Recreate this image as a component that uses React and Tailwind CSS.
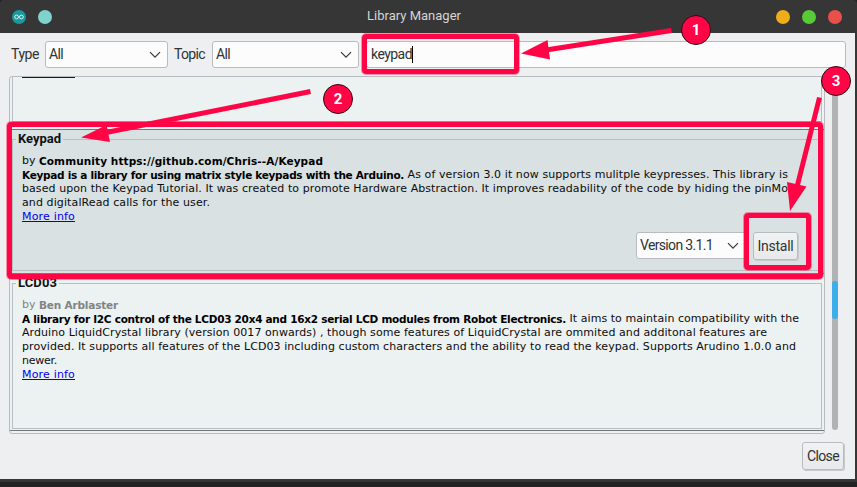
import { useLayoutEffect, useRef } from "react";

// Spreads the letters of one run of text over an exact width.
function Fit({ w, className = "", children }) {
  const ref = useRef(null);
  useLayoutEffect(() => {
    const el = ref.current;
    el.style.letterSpacing = "0px";
    const natural = el.getBoundingClientRect().width;
    el.style.letterSpacing = (w - natural) / el.textContent.length + "px";
  }, [w]);
  return (
    <span ref={ref} className={`inline-block whitespace-pre ${className}`}>
      {children}
    </span>
  );
}

function Chevron() {
  return (
    <svg width="12" height="8" viewBox="0 0 12 8" fill="none" stroke="#35383a" strokeWidth="1.2">
      <path d="M1 1.2 6 6.2l5-5" />
    </svg>
  );
}

function Select({ value, w, className = "pr-[6px]" }) {
  return (
    <div className={`flex h-[27px] items-center justify-between rounded-[3px] border border-[#b9bcbe] bg-[#fcfcfc] pl-[3px] ${className}`}>
      <Fit w={w}>{value}</Fit>
      <Chevron />
    </div>
  );
}

function Button({ w, className = "", children }) {
  return (
    <button className={`flex items-center justify-center rounded-[3px] border border-[#b9bcbe] bg-linear-to-b from-[#f1f2f3] to-[#e8e9ea] shadow-[1px_1px_0_#c6c9cb] ${className}`}>
      <Fit w={w}>{children}</Fit>
    </button>
  );
}

function GroupTitle({ w, children }) {
  return (
    <div className="flex h-[18px] items-center">
      <span className="h-px w-[4px] bg-[#b7bfc1]" />
      <Fit w={w} className="ml-[2px] mr-[2px] text-[13px] font-bold leading-[18px] text-[#111]">{children}</Fit>
      <span className="h-px flex-1 bg-[#b7bfc1]" />
    </div>
  );
}

function Line({ children }) {
  return <div className="flex h-[14px] leading-[14px]">{children}</div>;
}

const BODY = "pl-[9px] pt-[15px] font-['DejaVu_Sans',sans-serif] text-[11px] text-[#0c0c0c]";
const BOLD = "text-[10.5px] font-bold text-black";
const MARK = "absolute rounded-[4px] border-[5px] border-[#ff0546] shadow-[0_0_0_1px_rgba(255,5,70,0.4)]";

function Badge({ className, children }) {
  return (
    <div className={`absolute flex h-[30px] w-[30px] items-center justify-center rounded-full border border-[#2c0a14] bg-[#ff0546] pt-px text-[15px] font-bold text-white ${className}`}>
      {children}
    </div>
  );
}

export default function App() {
  return (
    <div className="relative flex h-[487px] w-[857px] flex-col overflow-hidden bg-[#232323] font-['Roboto',sans-serif] text-[14px] text-[#2f3335]">
      <header className="flex h-[33px] items-center rounded-t-[4px] bg-[#363636] pl-[12px] pr-[15px]">
        <span className="flex h-[14px] w-[14px] items-center justify-center rounded-full bg-[#1b999f]">
          <svg width="10" height="6" viewBox="0 0 10 6" fill="none" stroke="#d9f1f1" strokeWidth="1">
            <circle cx="2.6" cy="3" r="1.9" />
            <circle cx="7.4" cy="3" r="1.9" />
          </svg>
        </span>
        <span className="ml-[12px] h-[14px] w-[14px] rounded-full bg-[#7fd3cc]" />
        <span className="flex-1 pb-px pl-[315px] text-[13px] text-[#d5d5d5]"><Fit w={94}>Library Manager</Fit></span>
        <span className="flex gap-[12px]">
          <i className="h-[14px] w-[14px] rounded-full bg-[#f0ad1b]" />
          <i className="h-[14px] w-[14px] rounded-full bg-[#58ca37]" />
          <i className="h-[14px] w-[14px] rounded-full bg-[#ea504a]" />
        </span>
      </header>

      <main className="flex h-[446px] flex-col border-r-2 border-[#363636] bg-[#eeeff1]">
        <div className="flex items-center pl-[11px] pt-[8px]">
          <Fit w={28}>Type</Fit>
          <Select value="All" w={14} className="ml-[6px] w-[123px] pr-[6px]" />
          <Fit w={31} className="ml-[6px]">Topic</Fit>
          <Select value="All" w={14} className="ml-[7px] w-[147px] pr-[6px]" />
          <div className="ml-[7px] flex h-[27px] w-[480px] items-center rounded-[3px] border border-[#b9bcbe] bg-[#fcfcfc] pl-[4px]">
            <Fit w={41}>keypad</Fit>
            <span className="h-[17px] w-px bg-black" />
          </div>
        </div>

        <div className="flex pl-[9px] pt-[8px]">
          <div className="flex h-[358px] w-[816px] flex-col overflow-hidden rounded-[3px] border border-[#b9bcbe] bg-[#ecf1f2]">
            <section className="h-[52px] shrink-0 px-[2px]">
              <div className="h-[45px] border-x border-b border-[#b7bfc1] pl-[9px]">
                <div className="h-px w-[53px] bg-[#0000e0]" />
              </div>
            </section>

            <section className="flex h-[145px] shrink-0 flex-col border-y border-[#727879] bg-[#d9e1e2] px-[2px]">
              <GroupTitle w={43}>Keypad</GroupTitle>
              <div className="-mt-[9px] flex h-[132px] flex-col border-x border-b border-[#b7bfc1]">
                <div className={BODY}>
                  <Line>
                    <Fit w={17}>by </Fit>
                    <Fit w={284} className={BOLD}>Community https://github.com/Chris--A/Keypad</Fit>
                  </Line>
                  <Line>
                    <Fit w={382} className={BOLD}>Keypad is a library for using matrix style keypads with the Arduino.</Fit>
                    <Fit w={384}> As of version 3.0 it now supports mulitple keypresses. This library is</Fit>
                  </Line>
                  <Line><Fit w={766}>based upon the Keypad Tutorial. It was created to promote Hardware Abstraction. It improves readability of the code by hiding the pinMo</Fit></Line>
                  <Line><Fit w={188}>and digitalRead calls for the user.</Fit></Line>
                  <Line><Fit w={53} className="text-[#0000f0] underline">More info</Fit></Line>
                </div>
                <div className="flex pl-[623px] pt-[8px]">
                  <Select value="Version 3.1.1" w={73} className="w-[112px] pr-[8px]" />
                  <Button w={36} className="ml-[5px] h-[28px] w-[45px]">Install</Button>
                </div>
              </div>
            </section>

            <section className="flex h-[157px] shrink-0 flex-col border-b border-[#727879] bg-[#ecf1f2] px-[2px]">
              <GroupTitle w={39}>LCD03</GroupTitle>
              <div className="-mt-[9px] h-[146px] border-x border-b border-[#b7bfc1]">
                <div className={BODY}>
                  <Line>
                    <Fit w={17} className="text-[#808484]">by </Fit>
                    <Fit w={79} className={`${BOLD} text-[#808484]!`}>Ben Arblaster</Fit>
                  </Line>
                  <Line>
                    <Fit w={544} className={BOLD}>A library for I2C control of the LCD03 20x4 and 16x2 serial LCD modules from Robot Electronics.</Fit>
                    <Fit w={233}> It aims to maintain compatibility with the</Fit>
                  </Line>
                  <Line><Fit w={745}>Arduino LiquidCrystal library (version 0017 onwards) , though some features of LiquidCrystal are ommited and additonal features are</Fit></Line>
                  <Line><Fit w={774}>provided. It supports all features of the LCD03 including custom characters and the ability to read the keypad. Supports Arudino 1.0.0 and</Fit></Line>
                  <Line><Fit w={35}>newer.</Fit></Line>
                  <Line><Fit w={53} className="text-[#0000f0] underline">More info</Fit></Line>
                </div>
              </div>
            </section>
          </div>

          <div className="ml-[7px] flex h-[354px] w-[6px] flex-col rounded-full bg-[#b1b2b4] pt-[205px]">
            <div className="h-[38px] rounded-full bg-[#3daee9]" />
          </div>
        </div>

        <div className="flex justify-end pr-[11px] pt-[8px]">
          <Button w={32} className="h-[28px] w-[42px] pt-px">Close</Button>
        </div>
      </main>
      <div className="h-[3px] bg-[#363636]" />

      {/* Tutorial annotations drawn over the window */}
      <div className={`${MARK} left-[362px] top-[34px] h-[40px] w-[157px]`} />
      <div className={`${MARK} left-[7px] top-[122px] h-[157px] w-[816px]`} />
      <div className={`${MARK} left-[744px] top-[213px] h-[57px] w-[67px]`} />
      <svg className="absolute left-0 top-0" width="857" height="487" viewBox="0 0 857 487" fill="#ff0546" stroke="#ff0546">
        <path d="M671.500 30.500 546 50M310.500 91.500 106 132.500M819.500 97.500 797 187" strokeWidth="5" fill="none" />
        <path d="M521 53.500 547.500 40l2.500 19.500zM81 137.500 106.500 125l3.500 17zM790 211 787 182l19.500 4.500z" stroke="none" />
      </svg>
      <Badge className="left-[681px] top-[15px]">1</Badge>
      <Badge className="left-[323px] top-[84px]">2</Badge>
      <Badge className="left-[821px] top-[66px]">3</Badge>
    </div>
  );
}
